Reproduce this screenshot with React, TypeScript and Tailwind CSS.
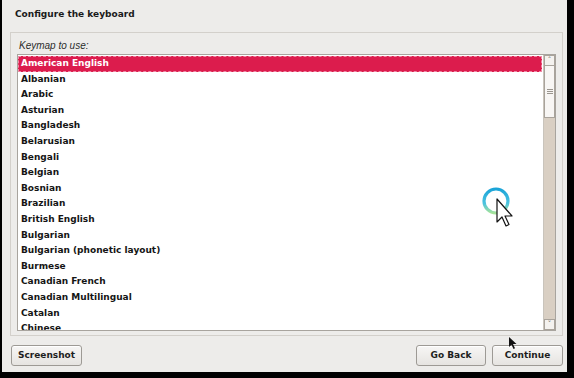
import React from 'react';

const keymaps = [
  'American English',
  'Albanian',
  'Arabic',
  'Asturian',
  'Bangladesh',
  'Belarusian',
  'Bengali',
  'Belgian',
  'Bosnian',
  'Brazilian',
  'British English',
  'Bulgarian',
  'Bulgarian (phonetic layout)',
  'Burmese',
  'Canadian French',
  'Canadian Multilingual',
  'Catalan',
  'Chinese',
];

const Button = ({ label, width }: { label: string; width: string }) => (
  <button
    className={`${width} h-[21px] rounded-[3px] border border-[#9d9a95] bg-gradient-to-b from-[#f7f6f5] to-[#e6e4e1] text-[9px] font-bold text-[#1e1e1e] shadow-[inset_0_1px_0_#ffffff]`}
  >
    {label}
  </button>
);

const Spinner = () => (
  <svg width="60" height="60" viewBox="0 0 60 60" className="absolute left-[466px] top-[172px]">
    <defs>
      <linearGradient id="ring" x1="0" y1="0" x2="0" y2="1">
        <stop offset="0" stopColor="#1aa4d8" />
        <stop offset="0.6" stopColor="#4cc3e0" />
        <stop offset="1" stopColor="#a6e39a" />
      </linearGradient>
    </defs>
    <circle cx="30" cy="29" r="12" fill="none" stroke="url(#ring)" strokeWidth="3.2" />
    <path
      d="M31 27 L31 50 L36 45 L40 54 L43 52.5 L39 44 L46 44 Z"
      fill="#ffffff"
      stroke="#111111"
      strokeWidth="1.2"
      strokeLinejoin="round"
    />
  </svg>
);

const SmallCursor = () => (
  <svg width="12" height="14" viewBox="0 0 12 14" className="absolute left-[508px] top-[336px]">
    <path d="M1 1 L1 11 L3.5 8.8 L5.5 13 L7 12.3 L5 8 L8.5 8 Z" fill="#111111" />
  </svg>
);

export default function App() {
  return (
    <div className="relative h-[378px] w-[574px] overflow-hidden bg-black font-['DejaVu_Sans',sans-serif]">
      <div className="ml-[2px] mr-[7px] flex h-[372px] flex-col bg-[#edecea]">
        <div className="flex h-[30px] items-center px-[13px] text-[9px] font-bold text-[#1a1a1a]">
          Configure the keyboard
        </div>
        <div className="ml-[8px] mr-[4px] mt-[2px] flex h-[304px] flex-col border border-[#d3d0cb] px-[6px]">
          <div className="flex h-[21px] items-end pb-[3px] pl-[2px] font-['Liberation_Sans',sans-serif] text-[10px] italic leading-[10px] text-[#2c2c2c]">
            Keymap to use:
          </div>
          <div className="flex h-[277px] border border-[#a8a49e] bg-white">
            <div className="flex-1 overflow-hidden pt-[1px]">
              {keymaps.map((k, i) => (
                <div
                  key={k}
                  className={`flex h-[15.6px] items-center whitespace-nowrap pl-[2px] text-[9px] font-bold ${
                    i === 0
                      ? 'border border-dashed border-[#f08aa5] bg-[#dc1c4d] text-white'
                      : 'border border-transparent text-[#151515]'
                  }`}
                >
                  {k}
                </div>
              ))}
            </div>
            <div className="ml-[1px] flex w-[12px] flex-col border-l border-[#c9c4bc] bg-[#d9cfc3]">
              <div className="flex h-[11px] items-center justify-center border border-[#a9a39b] bg-[#f4f2ef] text-[7px] leading-none text-[#555]">
                ˄
              </div>
              <div className="flex h-[52px] flex-col items-center justify-center gap-[1px] border-x border-b border-[#a9a39b] bg-[#f8f6f4]">
                <div className="h-px w-[6px] bg-[#9a958e]" />
                <div className="h-px w-[6px] bg-[#9a958e]" />
                <div className="h-px w-[6px] bg-[#9a958e]" />
              </div>
              <div className="flex-1" />
              <div className="flex h-[11px] items-center justify-center border border-[#a9a39b] bg-[#f4f2ef] text-[7px] leading-none text-[#555]">
                ˅
              </div>
            </div>
          </div>
        </div>
        <div className="flex flex-1 items-center gap-[6px] pl-[9px] pr-[4px] pt-[3px]">
          <Button label="Screenshot" width="w-[71px]" />
          <div className="flex-1" />
          <Button label="Go Back" width="w-[70px]" />
          <Button label="Continue" width="w-[71px]" />
        </div>
      </div>
      <Spinner />
      <SmallCursor />
    </div>
  );
}
